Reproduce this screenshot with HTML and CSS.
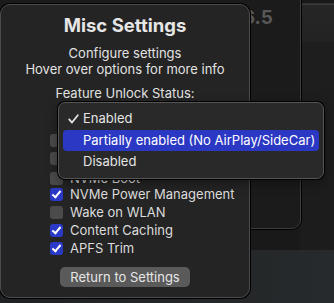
FILE: index.html
```html
<!DOCTYPE html>
<html lang="en">
<head>
  <meta charset="UTF-8" />
  <meta name="viewport" content="width=device-width, initial-scale=1" />
  <title>Misc Settings</title>
  <link rel="stylesheet" href="styles.css">
</head>
<body>

  <div class="desktop">
    <div class="side-pane"></div>
    <div class="bottom-pane"></div>
    <div class="main-window">
      <div class="main-title">v0.6.5</div>
    </div>

    <div class="sheet">
      <h2>Misc Settings</h2>
      <p class="intro">Configure settings<br>Hover over options for more info</p>
      <p class="label">Feature Unlock Status:</p>
      <div class="popup-row">
        <div class="popup"></div>
      </div>

      <!-- the first rows sit under the open menu -->
      <ul class="options">
        <li><span class="box"></span></li>
        <li><span class="box"></span></li>
        <li class="under-menu"><span class="box"></span>NVMe Boot</li>
        <li><span class="box checked"></span>NVMe Power Management</li>
        <li><span class="box"></span>Wake on WLAN</li>
        <li><span class="box checked"></span>Content Caching</li>
        <li><span class="box checked"></span>APFS Trim</li>
      </ul>

      <button class="return-btn">Return to Settings</button>
    </div>

    <div class="menu">
      <div class="menu-item">
        <svg class="tick" width="11" height="10" viewBox="0 0 11 10"><path d="M1.2 5.4 L4 8.6 L9.8 1.2" fill="none" stroke="#e8e8e8" stroke-width="1.7" stroke-linecap="round" stroke-linejoin="round"/></svg>
        Enabled
      </div>
      <div class="menu-item active">Partially enabled (No AirPlay/SideCar)</div>
      <div class="menu-item">Disabled</div>
    </div>
  </div>

</body>
</html>
```

FILE: styles.css
```css
body {
  margin: 0;
  background: #1a1a1a;
  font-family: Inter, "Noto Sans", sans-serif;
  color: #e2e2e2;
}
.desktop {
  position: relative;
  width: 334px;
  height: 303px;
  overflow: hidden;
  background: #191919;
}
.side-pane {
  position: absolute;
  left: 300px;
  top: 3px;
  width: 40px;
  height: 247px;
  background: linear-gradient(#262626 0, #232323 38px, #1e1e1e 38px, #1c1c1c 100%);
  border-top: 1px solid #2e2e2e;
  box-shadow: inset 0 38px 0 -37px #3a3a3a;
}
.bottom-pane {
  position: absolute;
  left: 0;
  top: 250px;
  width: 334px;
  height: 53px;
  background: linear-gradient(90deg, #1f2122, #272a2c);
}
.main-window {
  position: absolute;
  left: -60px;
  top: -8px;
  width: 359px;
  height: 235px;
  background: #1b1b1b;
  border: 1px solid #3e3e3e;
  border-radius: 9px;
  box-shadow: 0 0 0 1px #000;
}
.main-title {
  text-align: right;
  padding: 13px 27px 0 0;
  font-size: 19px;
  font-weight: bold;
  color: #575757;
}
.sheet {
  position: absolute;
  left: 0;
  top: 4px;
  width: 248px;
  height: 292px;
  background: #242424;
  border: 1px solid #4c4c4c;
  border-radius: 10px;
  box-shadow: 0 0 0 1px #000;
  text-align: center;
}
h2 {
  margin: 9px 0 0;
  font-size: 18.5px;
  line-height: 22px;
  color: #e6e6e6;
}
.intro {
  margin: 9px 0 0;
  font-size: 13px;
  line-height: 16px;
}
.label {
  margin: 8px 0 0;
  font-size: 13px;
  line-height: 16px;
}
.popup-row {
  height: 30px;
  display: flex;
  justify-content: center;
  align-items: center;
}
.popup {
  width: 100px;
  height: 18px;
  background: #555;
  border-radius: 5px;
}
.options {
  list-style: none;
  margin: 0;
  padding: 0 0 0 49px;
  text-align: left;
}
.options li {
  height: 18px;
  display: flex;
  align-items: center;
  gap: 7px;
  font-size: 13px;
  color: #dcdcdc;
}
.options li.under-menu {
  line-height: 13px;
  padding-top: 4px;
  box-sizing: border-box;
}
.box {
  width: 13px;
  height: 13px;
  border-radius: 3px;
  background: #4b4b4b;
  flex-shrink: 0;
  position: relative;
}
.box.checked {
  background: #2b3ac6;
}
.box.checked::after {
  content: "";
  position: absolute;
  left: 4px;
  top: 1px;
  width: 3px;
  height: 7px;
  border: solid #fff;
  border-width: 0 2px 2px 0;
  transform: rotate(40deg);
}
.return-btn {
  display: block;
  margin: 10px auto 0;
  width: 130px;
  height: 20px;
  padding: 0;
  border: none;
  border-radius: 5px;
  background: #5a5a5a;
  color: #e6e6e6;
  font-family: inherit;
  font-size: 13px;
}
.menu {
  position: absolute;
  left: 58px;
  top: 102px;
  width: 256px;
  padding: 5px 4px;
  background: #292929;
  border: 1px solid #555;
  border-radius: 7px;
  box-shadow: 0 0 0 1px #000, 0 4px 12px rgba(0,0,0,0.4);
}
.menu-item {
  height: 21.5px;
  line-height: 21.5px;
  padding-left: 20px;
  border-radius: 4px;
  font-size: 13px;
  color: #e4e4e4;
  position: relative;
}
.menu-item.active {
  background: #2b38c4;
  color: #fff;
}
.tick {
  position: absolute;
  left: 5px;
  top: 6px;
}
```
